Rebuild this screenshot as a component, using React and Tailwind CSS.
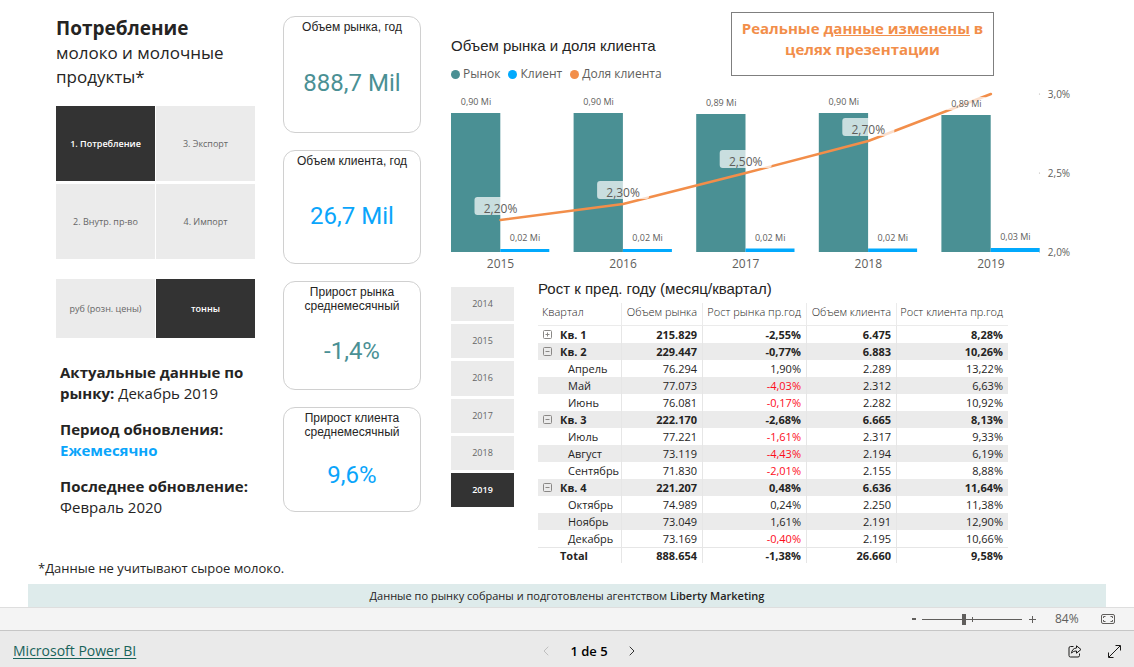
import { useState } from "react";
import { ChevronLeft, ChevronRight } from "lucide-react";

const cards = [
  { title: ["Объем рынка, год"], value: "888,7 Mil", height: "h-[117px]", color: "text-[#4a9094]" },
  { title: ["Объем клиента, год"], value: "26,7 Mil", height: "h-[114px]", color: "text-[#0aa5fb]" },
  { title: ["Прирост рынка", "среднемесячный"], value: "-1,4%", height: "h-[109px]", color: "text-[#4a9094]" },
  { title: ["Прирост клиента", "среднемесячный"], value: "9,6%", height: "h-[105px]", color: "text-[#0aa5fb]" },
];

const chartData = [
  { year: "2015", market: "0,90 Mi", top: 25, client: "0,02 Mi", clientH: 3, share: "2,20%", shareY: 132 },
  { year: "2016", market: "0,90 Mi", top: 25, client: "0,02 Mi", clientH: 3, share: "2,30%", shareY: 116 },
  { year: "2017", market: "0,89 Mi", top: 26, client: "0,02 Mi", clientH: 3.5, share: "2,50%", shareY: 85 },
  { year: "2018", market: "0,90 Mi", top: 25, client: "0,02 Mi", clientH: 3.5, share: "2,70%", shareY: 53 },
  { year: "2019", market: "0,89 Mi", top: 27, client: "0,03 Mi", clientH: 4, share: null, shareY: 6 },
];

const columns = ["Квартал", "Объем рынка", "Рост рынка пр.год", "Объем клиента", "Рост клиента пр.год"];

const rows = [
  { type: "closed", cells: ["Кв. 1", "215.829", "-2,55%", "6.475", "8,28%"] },
  { type: "open", cells: ["Кв. 2", "229.447", "-0,77%", "6.883", "10,26%"] },
  { type: "month", cells: ["Апрель", "76.294", "1,90%", "2.289", "13,22%"] },
  { type: "month", cells: ["Май", "77.073", "-4,03%", "2.312", "6,63%"] },
  { type: "month", cells: ["Июнь", "76.081", "-0,17%", "2.282", "10,92%"] },
  { type: "open", cells: ["Кв. 3", "222.170", "-2,68%", "6.665", "8,13%"] },
  { type: "month", cells: ["Июль", "77.221", "-1,61%", "2.317", "9,33%"] },
  { type: "month", cells: ["Август", "73.119", "-4,43%", "2.194", "6,19%"] },
  { type: "month", cells: ["Сентябрь", "71.830", "-2,01%", "2.155", "8,88%"] },
  { type: "open", cells: ["Кв. 4", "221.207", "0,48%", "6.636", "11,64%"] },
  { type: "month", cells: ["Октябрь", "74.989", "0,24%", "2.250", "11,38%"] },
  { type: "month", cells: ["Ноябрь", "73.049", "1,61%", "2.191", "12,90%"] },
  { type: "month", cells: ["Декабрь", "73.169", "-0,40%", "2.195", "10,66%"] },
  { type: "total", cells: ["Total", "888.654", "-1,38%", "26.660", "9,58%"] },
];

export default function App() {
  const [section, setSection] = useState("1. Потребление");
  const [unit, setUnit] = useState("тонны");
  const [year, setYear] = useState("2019");
  const [zoom, setZoom] = useState(84);

  return (
    <div className="min-h-screen flex flex-col bg-white font-['Open_Sans','Noto_Sans',sans-serif] text-[#252423]">
      <main className="flex-1 flex flex-col">
        <div className="flex items-start pl-14 pr-[49px]">
          {/* Filters and info */}
          <section className="w-[199px] shrink-0 pt-[15px]">
            <h1 className="text-[19px] leading-[26px] font-bold">Потребление</h1>
            <p className="text-[17px] leading-6 mb-[17px]">
              молоко и молочные
              <br />
              продукты*
            </p>
            <div className="grid grid-cols-2 gap-x-px gap-y-[3px] mb-5">
              {["1. Потребление", "3. Экспорт", "2. Внутр. пр-во", "4. Импорт"].map((s) => (
                <Tile key={s} label={s} size="h-[75px] text-[9px]" active={s === section} onClick={() => setSection(s)} />
              ))}
            </div>
            <div className="grid grid-cols-2 gap-x-px">
              {["руб (розн. цены)", "тонны"].map((u) => (
                <Tile key={u} label={u} size="h-[59px] text-[9px]" active={u === unit} onClick={() => setUnit(u)} />
              ))}
            </div>
            <div className="pl-1 pt-6 space-y-[15px] text-[15px] leading-[21px] whitespace-nowrap">
              <p>
                <b>
                  Актуальные данные по
                  <br />
                  рынку:
                </b>{" "}
                Декабрь 2019
              </p>
              <p className="font-bold">
                Период обновления:
                <br />
                <span className="text-[#0aa5fb]">Ежемесячно</span>
              </p>
              <p>
                <b>Последнее обновление:</b>
                <br />
                Февраль 2020
              </p>
            </div>
          </section>

          {/* KPI cards */}
          <section className="w-[138px] shrink-0 ml-7 pt-4 flex flex-col gap-[17px]">
            {cards.map((c) => (
              <Card key={c.value} {...c} />
            ))}
          </section>

          <section className="flex-1 min-w-0 ml-[30px] pt-3">
            <div className="flex h-[76px]">
              <div className="w-[280px] shrink-0 pt-6">
                <h2 className="font-['Liberation_Sans',sans-serif] text-[15px] leading-5">Объем рынка и доля клиента</h2>
                <ul className="flex gap-2 mt-2 text-[12px] leading-5 text-[#605e5c]">
                  <Legend color="bg-[#4a9094]" label="Рынок" />
                  <Legend color="bg-[#01a9fd]" label="Клиент" />
                  <Legend color="bg-[#f28e4a]" label="Доля клиента" />
                </ul>
              </div>
              <div className="w-[263px] h-16 border border-[#7f7f7f] pt-[5px] text-center text-[15px] leading-[21px] font-bold text-[#f28e4a]">
                Реальные <u>данные изменены</u> в
                <br />
                целях презентации
              </div>
            </div>

            <Chart />

            <div className="flex items-start pt-[7px]">
              <div className="w-[63px] h-[220px] shrink-0 mt-2 grid grid-rows-6 gap-[3px] mr-6">
                {["2014", "2015", "2016", "2017", "2018", "2019"].map((y) => (
                  <Tile key={y} label={y} size="text-[9px]" active={y === year} onClick={() => setYear(y)} />
                ))}
              </div>
              <div className="min-w-0">
                <h2 className="font-['Liberation_Sans',sans-serif] text-[15px] leading-5 mb-1">
                  Рост к пред. году (месяц/квартал)
                </h2>
                <GrowthTable />
              </div>
            </div>
          </section>
        </div>

        <p className="pl-[38px] text-[13px] leading-[10px]">*Данные не учитывают сырое молоко.</p>
        <div className="mt-auto mx-7 h-[23px] bg-[#deebeb] text-center text-[11px] leading-[23px]">
          Данные по рынку собраны и подготовлены агентством <b className="font-semibold">Liberty Marketing</b>
        </div>
      </main>

      {/* Zoom bar */}
      <div className="h-[23px] flex items-center justify-end bg-[#f4f4f4] border-t border-[#dedede] pr-[19px] text-[#605e5c]">
        <button aria-label="-" className="w-2 h-4 mr-1 flex items-center justify-center">
          <span className="w-1 h-[2px] bg-[#605e5c]" />
        </button>
        <div className="relative h-4 w-[100px] flex items-center">
          <span className="absolute left-[50px] top-[6px] w-px h-[5px] bg-[#605e5c]" />
          <input
            type="range"
            min="0"
            max="200"
            value={zoom}
            onChange={(e) => setZoom(Number(e.target.value))}
            aria-label="Zoom"
            className="w-full h-px appearance-none bg-[#605e5c] outline-none [&::-webkit-slider-thumb]:appearance-none [&::-webkit-slider-thumb]:w-1 [&::-webkit-slider-thumb]:h-[11px] [&::-webkit-slider-thumb]:bg-[#605e5c]"
          />
        </div>
        <button aria-label="+" className="ml-[6px] w-2 h-4 flex items-center justify-center">
          <svg width="7" height="7" viewBox="0 0 7 7" stroke="#605e5c">
            <path d="M3.5 0v7M0 3.5h7" />
          </svg>
        </button>
        <span className="w-6 ml-[19px] text-[12px] leading-4">{zoom}%</span>
        <button aria-label="Fit to page" className="ml-[22px]">
          <svg width="14" height="10" viewBox="0 0 14 10" fill="none" stroke="#605e5c">
            <rect x="0.5" y="0.5" width="13" height="9" rx="1.5" />
            <path d="M4.5 2.5h-2v1.5M2.5 6v1.5h2M9.5 2.5h2v1.5M11.5 6v1.5h-2" />
          </svg>
        </button>
      </div>

      <footer className="h-[37px] grid grid-cols-3 items-center bg-[#eaeaea] border-t border-[#c6c6c6] pt-1 pl-[13px] pr-[13px]">
        <a href="#" className="justify-self-start text-[14px] leading-5 text-[#18635a] underline underline-offset-2">
          Microsoft Power BI
        </a>
        <div className="flex items-center justify-center text-[13px] leading-5 font-semibold text-black pl-11">
          <button aria-label="Previous page" className="text-[#c0c0c0]">
            <ChevronLeft className="w-4 h-4" strokeWidth={1.5} />
          </button>
          <span className="mx-4">1 de 5</span>
          <button aria-label="Next page" className="text-[#333]">
            <ChevronRight className="w-4 h-4" strokeWidth={1.5} />
          </button>
        </div>
        <div className="flex items-center justify-end gap-[26px]">
          <button aria-label="Share">
            <svg width="14" height="13" viewBox="0 0 14 13" fill="none" stroke="#1b1a19" strokeLinejoin="round">
              <path d="M5.5 1.5h-3a1.5 1.5 0 0 0-1.500 1.500v7.500a1.500 1.500 0 0 0 1.500 1.500h7.500a1.500 1.500 0 0 0 1.500-1.500v-2" />
              <path d="M8.500 0.800l4.500 3.700-4.500 3.700v-2.200c-2.200 0-3.800 0.600-5 2.200 0.300-3 2-5 5-5.200z" />
            </svg>
          </button>
          <button aria-label="Full screen">
            <svg width="13" height="13" viewBox="0 0 13 13" fill="none" stroke="#1b1a19">
              <path d="M1 12L12 1M7.500 0.500h5v5M0.500 7.500v5h5" />
            </svg>
          </button>
        </div>
      </footer>
    </div>
  );
}

const Tile = ({ label, size, active, onClick }) => (
  <button
    type="button"
    onClick={onClick}
    className={`${size} leading-4 whitespace-nowrap ${
      active ? "bg-[#333333] text-white font-semibold" : "bg-[#ebebeb] text-[#666666]"
    }`}
  >
    {label}
  </button>
);

const Card = ({ title, value, height, color }) => (
  <div className={`${height} flex flex-col items-center rounded-xl border border-[#d0d0d0] pt-[3px]`}>
    <h3 className="text-center font-['Liberation_Sans',sans-serif] text-[12px] leading-[14px]">
      {title.map((line) => (
        <span key={line} className="block">{line}</span>
      ))}
    </h3>
    <p className={`${color} flex-1 flex items-center font-['Roboto',sans-serif] text-2xl`}>{value}</p>
  </div>
);

const Legend = ({ color, label }) => (
  <li className="flex items-center gap-[3px]">
    <span className={`${color} w-[9px] h-[9px] rounded-full`} />
    {label}
  </li>
);

// 122.6px per year, 49px per bar, baseline at y=164
const Chart = () => {
  const left = (i) => i * 122.6;
  const points = chartData.map((d, i) => `${left(i) + 49.5},${d.shareY}`).join(" ");

  return (
    <svg viewBox="0 0 634 184" className="block w-full" fill="#605e5c" fontSize="9" textAnchor="middle">
      {chartData.map((d, i) => (
        <g key={d.year}>
          <rect x={left(i)} y={d.top} width="49.3" height={164 - d.top} fill="#4a9094" />
          <rect x={left(i) + 49.3} y={164 - d.clientH} width="49" height={d.clientH} fill="#01a9fd" />
          <text x={left(i) + 49.5} y="180" fontSize="12">{d.year}</text>
        </g>
      ))}
      <polyline points={points} fill="none" stroke="#f28e4a" strokeWidth="2.5" strokeLinejoin="round" strokeLinecap="round" />
      {chartData.map((d, i) => (
        <g key={d.year}>
          <rect x={left(i) + 4} y={d.top - 18} width="41" height="13" rx="2" fill="#fff" fillOpacity="0.7" />
          <text x={left(i) + 25} y={d.top - 8}>{d.market}</text>
          <text x={left(i) + 74} y={156 - d.clientH}>{d.client}</text>
          {d.share && (
            <>
              <rect x={left(i) + 23.5} y={d.shareY - 23} width="52" height="18" rx="3" fill="#fff" fillOpacity="0.7" />
              <text x={left(i) + 49.5} y={d.shareY - 7} fontSize="12">{d.share}</text>
            </>
          )}
        </g>
      ))}
      {[["3,0%", 6], ["2,5%", 85], ["2,0%", 164]].map(([label, y]) => (
        <g key={label}>
          <circle cx="588.500" cy={y} r="0.6" fill="#b3b0ad" />
          <text x="608" y={y + 4} fontSize="10">{label}</text>
        </g>
      ))}
    </svg>
  );
};

const Toggle = ({ open }) => (
  <button type="button" aria-label={open ? "Collapse" : "Expand"} className="w-[9px] h-[9px] mr-2">
    <svg width="9" height="9" viewBox="0 0 9 9" fill="none" stroke="#8a8886">
      <rect x="0.5" y="0.5" width="8" height="8" rx="1" />
      <path d={open ? "M2.500 4.500h4" : "M2.500 4.500h4M4.500 2.500v4"} />
    </svg>
  </button>
);

const GrowthTable = () => (
  <table className="w-[470px] table-fixed border-separate border-spacing-0 text-[11px] leading-4">
    <colgroup>
      <col className="w-[84px]" />
      <col className="w-[81px]" />
      <col className="w-[104px]" />
      <col className="w-[90px]" />
      <col className="w-[111px]" />
    </colgroup>
    <thead>
      <tr className="h-[23px]">
        {columns.map((c, i) => (
          <th
            key={c}
            className={`p-0 pb-1 font-light whitespace-nowrap border-b border-[#ebebeb] ${
              i === 0 ? "text-left pl-1" : "text-right pr-[5px]"
            } ${i < 4 ? "border-r" : ""}`}
          >
            {c}
          </th>
        ))}
      </tr>
    </thead>
    <tbody>
      {rows.map((row, r) => (
        <tr
          key={row.cells[0]}
          className={`${row.type === "total" ? "h-4 leading-[15px]" : "h-[17px]"} ${
            r % 2 && row.type !== "total" ? "bg-[#ebebeb]" : ""
          } ${row.type === "month" ? "" : "font-bold"}`}
        >
          {row.cells.map((cell, i) => (
            <td
              key={i}
              className={`p-0 whitespace-nowrap border-[#e6e6e6] ${i < 4 ? "border-r" : ""} ${
                row.type === "total" ? "border-t" : ""
              } ${i > 0 ? "text-right pr-[5px]" : ""} ${
                row.type === "month" && cell.startsWith("-") ? "text-[#fd0d1b]" : ""
              }`}
            >
              {i === 0 ? <RowLabel type={row.type} label={cell} /> : cell}
            </td>
          ))}
        </tr>
      ))}
    </tbody>
  </table>
);

const RowLabel = ({ type, label }) => {
  if (type === "month") return <span className="block pl-[30px]">{label}</span>;
  if (type === "total") return <span className="block pl-[22px]">{label}</span>;
  return (
    <span className="flex items-center pl-[5px]">
      <Toggle open={type === "open"} />
      {label}
    </span>
  );
};
